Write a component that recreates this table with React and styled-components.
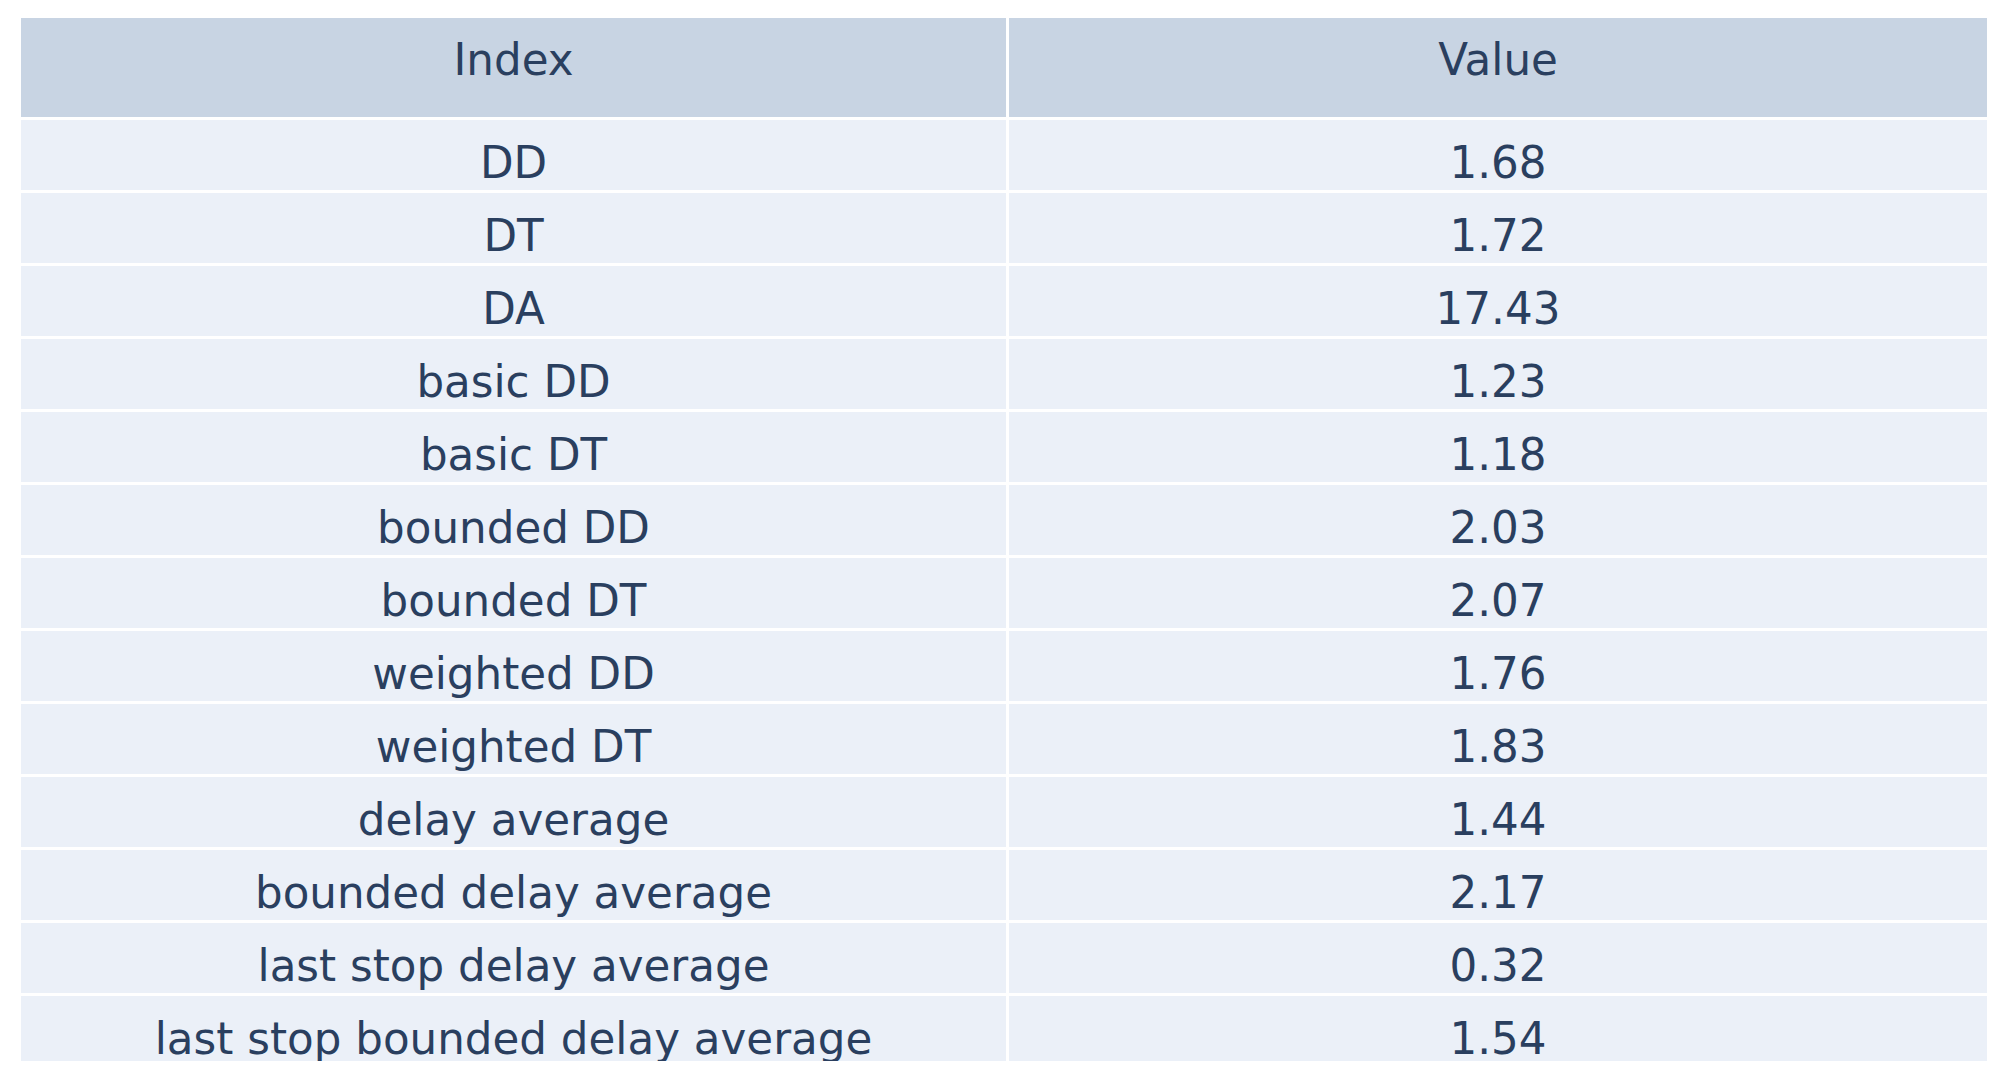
import React from 'react'
import styled, { createGlobalStyle } from 'styled-components'

const rows = [
  ['DD', '1.68'],
  ['DT', '1.72'],
  ['DA', '17.43'],
  ['basic DD', '1.23'],
  ['basic DT', '1.18'],
  ['bounded DD', '2.03'],
  ['bounded DT', '2.07'],
  ['weighted DD', '1.76'],
  ['weighted DT', '1.83'],
  ['delay average', '1.44'],
  ['bounded delay average', '2.17'],
  ['last stop delay average', '0.32'],
  ['last stop bounded delay average', '1.54'],
]

export default function App() {
  return (
    <>
      <GlobalStyle />
      <Page>
        <Table>
          <HeaderCell>Index</HeaderCell>
          <HeaderCell>Value</HeaderCell>
          {rows.map(([name, value]) => (
            <React.Fragment key={name}>
              <Cell>{name}</Cell>
              <Cell>{value}</Cell>
            </React.Fragment>
          ))}
        </Table>
      </Page>
    </>
  )
}

const GlobalStyle = createGlobalStyle`
  html, body {
    margin: 0;
    padding: 0;
    background: #ffffff;
  }
`

const Page = styled.div`
  width: 2008px;
  height: 1082px;
  padding: 18px 0 0 21px;
  box-sizing: border-box;
  overflow: hidden;
`

// table is cut off at the bottom like the source view
const Table = styled.div`
  display: grid;
  grid-template-columns: 985px 978px;
  grid-template-rows: 99px;
  grid-auto-rows: 70px;
  column-gap: 3px;
  row-gap: 3px;
  width: 1966px;
  height: 1043px;
  overflow: hidden;
  font-family: "DejaVu Sans", Verdana, sans-serif;
  font-size: 43.6px;
  line-height: 1;
  color: #2a3f5f;
`

const HeaderCell = styled.div`
  background: #c8d4e3;
  text-align: center;
  padding-top: 21px;
  box-sizing: border-box;
`

const Cell = styled.div`
  background: #ebf0f8;
  text-align: center;
  padding-top: 22px;
  box-sizing: border-box;
  white-space: nowrap;
`
